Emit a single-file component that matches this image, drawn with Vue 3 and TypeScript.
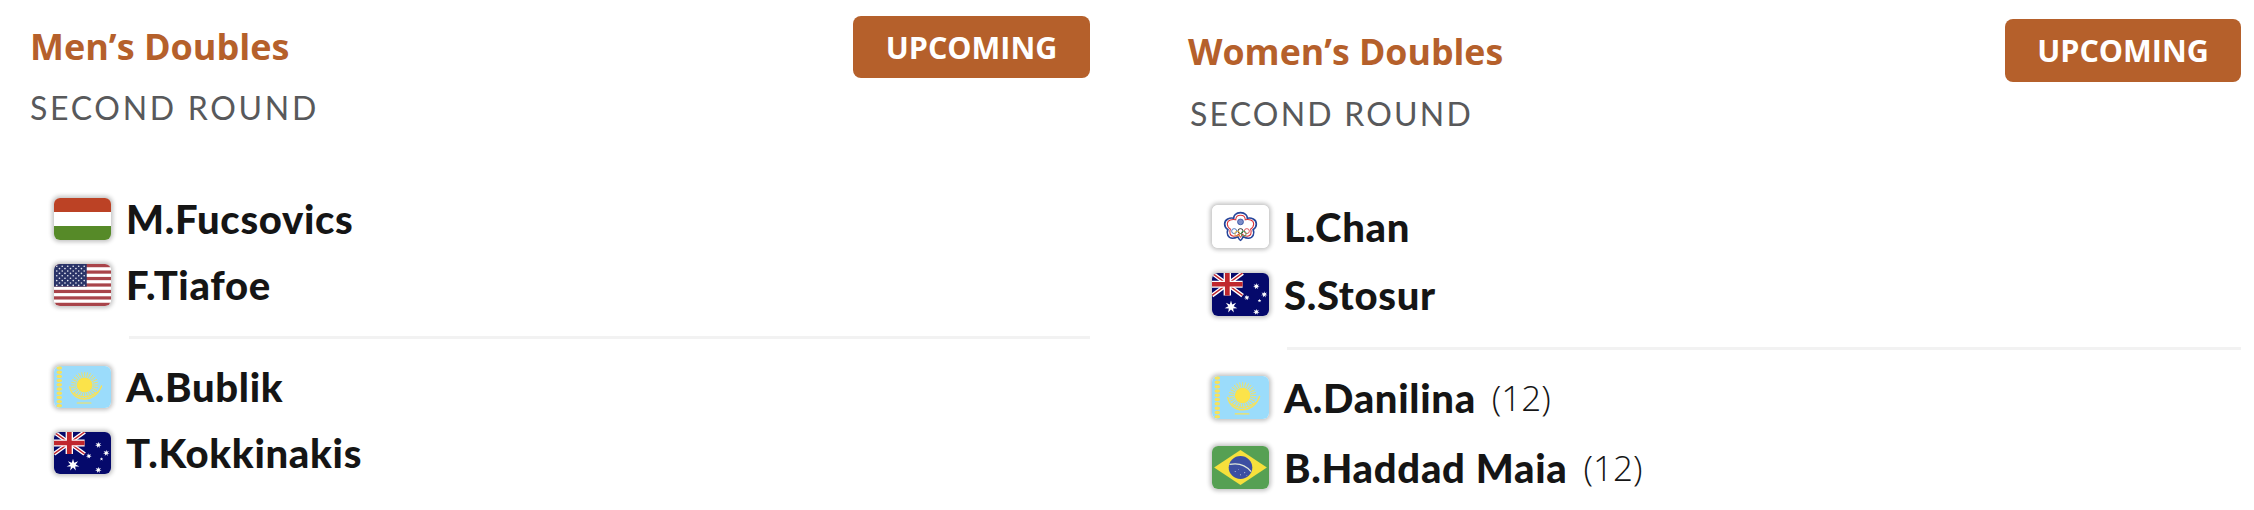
<script setup lang="ts">
interface Player {
  name: string;
  flag: string;
  seed?: number;
}

interface Match {
  id: string;
  title: string;
  round: string;
  teams: Player[][];
}

const matches: Match[] = [
  {
    id: 'men',
    title: 'Men’s Doubles',
    round: 'SECOND ROUND',
    teams: [
      [{ name: 'M.Fucsovics', flag: 'hun' }, { name: 'F.Tiafoe', flag: 'usa' }],
      [{ name: 'A.Bublik', flag: 'kaz' }, { name: 'T.Kokkinakis', flag: 'aus' }],
    ],
  },
  {
    id: 'women',
    title: 'Women’s Doubles',
    round: 'SECOND ROUND',
    teams: [
      [{ name: 'L.Chan', flag: 'tpe' }, { name: 'S.Stosur', flag: 'aus' }],
      [{ name: 'A.Danilina', flag: 'kaz', seed: 12 }, { name: 'B.Haddad Maia', flag: 'bra', seed: 12 }],
    ],
  },
];

// canton stars of the US flag
const usStars: { x: number; y: number }[] = [];
for (let row = 0; row < 9; row++) {
  const count = row % 2 === 0 ? 6 : 5;
  for (let i = 0; i < count; i++) {
    usStars.push({ x: (row % 2 === 0 ? 2.6 : 5.2) + i * 5.2, y: 2.2 + row * 2.4 });
  }
}

const sunRays = Array.from({ length: 28 }, (_, i) => (i * 360) / 28);
const ornament = Array.from({ length: 10 }, (_, i) => 2 + i * 4.2);

const starPoints = (cx: number, cy: number, r: number, n = 7): string => {
  const pts: string[] = [];
  for (let i = 0; i < n * 2; i++) {
    const rad = i % 2 === 0 ? r : r * 0.42;
    const a = (Math.PI * i) / n - Math.PI / 2;
    pts.push(`${(cx + rad * Math.cos(a)).toFixed(2)},${(cy + rad * Math.sin(a)).toFixed(2)}`);
  }
  return pts.join(' ');
};
</script>

<template>
  <div class="page">
    <svg class="sprite" aria-hidden="true">
      <symbol id="flag-hun" viewBox="0 0 54 42" preserveAspectRatio="none">
        <rect width="54" height="14" fill="#bc4225" />
        <rect y="14" width="54" height="14" fill="#fff" />
        <rect y="28" width="54" height="14" fill="#568a28" />
      </symbol>

      <symbol id="flag-usa" viewBox="0 0 54 42" preserveAspectRatio="none">
        <rect width="54" height="42" fill="#fff" />
        <rect v-for="i in 7" :key="i" y="0" :transform="`translate(0 ${(i - 1) * 6.46})`" width="54" height="3.23" fill="#a9444a" />
        <rect width="31" height="22.6" fill="#2a3468" />
        <circle v-for="(s, i) in usStars" :key="i" :cx="s.x" :cy="s.y" r="0.8" fill="#e8eaf2" />
      </symbol>

      <symbol id="flag-kaz" viewBox="0 0 54 42" preserveAspectRatio="none">
        <rect width="54" height="42" fill="#9bdcfb" />
        <g fill="#f7e25a">
          <ellipse v-for="y in ornament" :key="y" cx="5" :cy="y" rx="2.700" ry="1.700" />
        </g>
        <g stroke="#f7e25a" stroke-width="0.800">
          <line v-for="a in sunRays" :key="a" x1="29" y1="11" x2="29" y2="6" :transform="`rotate(${a} 29 19)`" />
        </g>
        <circle cx="29" cy="19" r="7.500" fill="#fbe34a" />
        <g fill="none" stroke="#f7e25a" stroke-linecap="round">
          <path d="M15 21c1 7 7 12 14 12 6 0 13-4 16-13" stroke-width="1.400" />
          <path d="M19 27c4 4 13 6 22-1" stroke-width="1.200" />
          <path d="M22 37h13" stroke-width="1.100" />
        </g>
      </symbol>

      <symbol id="flag-aus" viewBox="0 0 54 42" preserveAspectRatio="none">
        <rect width="54" height="42" fill="#05096b" />
        <g>
          <path d="M0 0l29 22M29 0L0 22" stroke="#fff" stroke-width="4" />
          <path d="M0 0l29 22M29 0L0 22" stroke="#c0272d" stroke-width="1.400" />
          <path d="M14.500 0v22M0 11h29" stroke="#fff" stroke-width="7" />
          <path d="M14.500 0v22M0 11h29" stroke="#c0272d" stroke-width="4.500" />
        </g>
        <polygon :points="starPoints(18, 33, 6.200)" fill="#fff" />
        <polygon :points="starPoints(42, 13, 3.200)" fill="#fff" />
        <polygon :points="starPoints(33, 24, 2.800)" fill="#fff" />
        <polygon :points="starPoints(49.500, 21, 3.200)" fill="#fff" />
        <polygon :points="starPoints(45, 27, 1.800, 5)" fill="#fff" />
        <polygon :points="starPoints(42, 38, 3.200)" fill="#fff" />
      </symbol>

      <symbol id="flag-bra" viewBox="0 0 54 42" preserveAspectRatio="none">
        <rect width="54" height="42" fill="#56a053" />
        <polygon points="2,21 27,4 52,21 27,38" fill="#f7e03c" />
        <circle cx="27" cy="21" r="11.200" fill="#3c4fa2" />
        <path d="M16.500 18c7-1.500 15 0 20.500 7" stroke="#dfe7da" stroke-width="1.300" fill="none" />
        <g fill="#cfd5ee">
          <circle cx="22" cy="25" r="0.500" />
          <circle cx="27" cy="28" r="0.500" />
          <circle cx="31" cy="26" r="0.500" />
          <circle cx="25" cy="23" r="0.400" />
          <circle cx="33" cy="29" r="0.400" />
        </g>
      </symbol>

      <symbol id="flag-tpe" viewBox="0 0 54 42" preserveAspectRatio="none">
        <rect width="54" height="42" fill="#fff" />
        <g fill="none">
          <path d="M27 7.500c4.500 0 6.500 3 6.500 5.500 3.500-1 8.500 1 8.500 5.500 0 2.500-1.500 4.500-3 5.500 1.500 3.500 0 8.500-4.500 8.500-2 0-4-1-5-1.500-1 2-1.500 3.500-2.500 3.500s-1.500-1.500-2.500-3.500c-1 .5-3 1.500-5 1.500-4.500 0-6-5-4.500-8.500-1.500-1-3-3-3-5.500 0-4.500 5-6.500 8.500-5.500 0-2.500 2-5.500 6.500-5.500z" stroke="#27459b" stroke-width="1.600" />
          <path d="M27 10c3 0 4.500 2 4.500 4.500 3-1 8 0 8 4 0 2.500-1.500 4-3 5 1.500 3 .5 7-3 7-2 0-4-1-5-2-.5 1.500-1 3-1.500 3s-1-1.500-1.500-3c-1 1-3 2-5 2-3.500 0-4.500-4-3-7-1.500-1-3-2.500-3-5 0-4 5-5 8-4 0-2.500 1.500-4.500 4.500-4.500z" stroke="#d8333a" stroke-width="1" />
          <circle cx="27" cy="16.500" r="2.800" fill="#7c8ec9" stroke="#27459b" stroke-width="0.700" />
          <circle cx="21" cy="25.500" r="2.400" stroke="#2f62b5" stroke-width="0.800" />
          <circle cx="27" cy="25.500" r="2.400" stroke="#111" stroke-width="0.800" />
          <circle cx="33" cy="25.500" r="2.400" stroke="#d8333a" stroke-width="0.800" />
          <circle cx="24" cy="28" r="2.400" stroke="#e6b02e" stroke-width="0.800" />
          <circle cx="30" cy="28" r="2.400" stroke="#3c9a48" stroke-width="0.800" />
        </g>
      </symbol>
    </svg>

    <section v-for="match in matches" :key="match.id" class="match" :class="match.id">
      <header class="match-head">
        <div>
          <h2 class="match-title">{{ match.title }}</h2>
          <div class="match-round">{{ match.round }}</div>
        </div>
        <div class="status">UPCOMING</div>
      </header>

      <div class="teams">
        <template v-for="(team, t) in match.teams" :key="t">
          <div v-if="t > 0" class="divider"></div>
          <div class="team">
            <div v-for="player in team" :key="player.name" class="player">
              <span class="flag"><svg width="100%" height="100%"><use :href="`#flag-${player.flag}`" /></svg></span>
              <span class="name">{{ player.name }}</span>
              <span v-if="player.seed" class="seed">({{ player.seed }})</span>
            </div>
          </div>
        </template>
      </div>
    </section>
  </div>
</template>

<style scoped>
.page {
  display: flex;
  height: 510px;
  padding-left: 30px;
  box-sizing: border-box;
  background: #fff;
  overflow: hidden;
}

.sprite {
  position: absolute;
  width: 0;
  height: 0;
}

.match {
  width: 1060px;
  padding-top: 16px;
  box-sizing: border-box;
}

.match.women {
  width: 1053px;
  margin-left: 98px;
  padding-top: 19px;
}

.match-head {
  display: flex;
  justify-content: space-between;
  align-items: flex-start;
}

.match-title {
  margin: 9px 0 0;
  font: 700 36px/44px "Open Sans", sans-serif;
  color: #b5602b;
}

.women .match-title {
  margin-top: 10px;
  font-size: 35.7px;
}

.match-round {
  margin-top: 19px;
  font: 400 32px/40px Lato, sans-serif;
  letter-spacing: 2.7px;
  color: #58595b;
}

.women .match-round {
  margin: 21px 0 0 2px;
  letter-spacing: 2.2px;
}

.status {
  width: 237px;
  height: 62px;
  display: flex;
  align-items: center;
  justify-content: center;
  border-radius: 8px;
  background: #b5602b;
  color: #fff;
  font: 700 30.5px/1 "Open Sans", sans-serif;
}

.women .status {
  width: 236px;
  height: 63px;
}

.teams {
  margin: 70px 0 0 24px;
}

.women .teams {
  margin-top: 71px;
}

.team {
  display: flex;
  flex-direction: column;
  gap: 24px;
}

.women .team {
  gap: 25px;
}

.women .team:last-child {
  gap: 27px;
}

.divider {
  height: 3px;
  margin: 30px 0 27px 75px;
  background: #f2f2f2;
}

.women .divider {
  margin: 31px 0 26px 75px;
}

.player {
  display: flex;
  align-items: center;
  height: 42px;
}

.women .player {
  height: 43px;
}

.flag {
  flex: none;
  width: 57px;
  height: 100%;
  margin-right: 15px;
  border-radius: 6px;
  overflow: hidden;
  box-shadow: 0 0 4px 2px rgba(0, 0, 0, 0.24);
}

.flag svg {
  display: block;
}

.name {
  font: 900 40px/42px Lato, sans-serif;
  letter-spacing: 0.7px;
  color: #151515;
}

.seed {
  margin-left: 16px;
  font: 300 35px/42px "Open Sans", sans-serif;
  color: #151515;
}
</style>
